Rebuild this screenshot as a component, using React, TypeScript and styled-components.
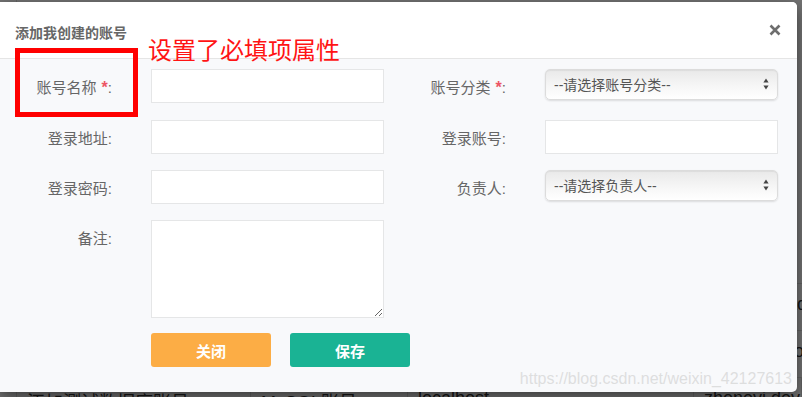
import React from "react";
import styled, { createGlobalStyle } from "styled-components";

const Global = createGlobalStyle`
  html, body { margin: 0; padding: 0; }
  body { font-family: "Liberation Sans", "Noto Sans CJK SC", sans-serif; background: #fff; }
  * { box-sizing: border-box; }
`;

const Page = styled.div`
  position: relative;
  width: 802px;
  height: 397px;
  overflow: hidden;
  background: #fff;
`;

const BgTable = styled.div`
  display: flex;
  flex-direction: column;
  padding-top: 283px;
  border-left: 1px solid #ddd;
  margin-left: 16px;
`;

const BgRow = styled.div`
  display: grid;
  grid-template-columns: 234px 157px 286px 1fr;
  height: 47px;
  border-top: 1px solid #ddd;
  font-size: 18px;
  color: #333;
  & > span {
    padding: 10px 0 0 10px;
    white-space: nowrap;
    border-right: 1px solid #ddd;
  }
`;

const Backdrop = styled.div`
  position: absolute;
  inset: 0;
  background: rgba(0, 0, 0, 0.55);
`;

const Modal = styled.div`
  position: absolute;
  left: 0;
  top: 2px;
  width: 797px;
  height: 390px;
  border-radius: 0 5px 5px 0;
  background: #f8f9fb;
  box-shadow: 0 5px 15px rgba(0, 0, 0, 0.5);
  display: flex;
  flex-direction: column;
  overflow: hidden;
`;

const Header = styled.div`
  height: 57px;
  background: #fff;
  border-bottom: 1px solid #e5e5e5;
  display: flex;
  justify-content: space-between;
  align-items: flex-start;
  padding: 21px 16px 0 15px;
`;

const Title = styled.h4`
  margin: 0;
  font-size: 14px;
  line-height: 20px;
  font-weight: bold;
  color: #676767;
`;

const CloseX = styled.button`
  border: 0;
  background: transparent;
  padding: 0;
  margin-top: 1px;
  width: 12px;
  height: 12px;
  cursor: pointer;
  display: flex;
`;

const Body = styled.div`
  padding-top: 10px;
  display: flex;
  flex-direction: column;
`;

const Row = styled.div<{ $mb?: number }>`
  display: flex;
  align-items: flex-start;
  margin-bottom: ${(p) => p.$mb ?? 16}px;
`;

const Field = styled.div`
  display: flex;
  align-items: flex-start;
  width: 394px;
`;

const Label = styled.label`
  width: 112px;
  height: 34px;
  margin-right: 39px;
  text-align: right;
  font-size: 15px;
  color: #666;
  line-height: 34px;
  padding-top: 2px;
  white-space: nowrap;
`;

const Star = styled.span`
  color: #ed5565;
  font-size: 16px;
  font-weight: bold;
  margin-left: 5px;
`;

const Input = styled.input`
  width: 233px;
  height: 34px;
  border: 1px solid #e5e6e7;
  background: #fff;
  border-radius: 0;
  outline: none;
  padding: 6px 12px;
  font-size: 14px;
`;

const TextArea = styled.textarea`
  width: 233px;
  height: 98px;
  border: 1px solid #e5e6e7;
  background: #fff;
  outline: none;
  padding: 6px 12px;
  font-size: 14px;
  display: block;
  margin: 0;
`;

const SelectWrap = styled.div`
  position: relative;
  width: 233px;
  height: 31px;
`;

const Select = styled.select`
  appearance: none;
  -webkit-appearance: none;
  width: 100%;
  height: 100%;
  border: 1px solid #dcdcdc;
  border-radius: 5px;
  background: linear-gradient(to bottom, #e9e9e9 0%, #f6f6f6 55%, #ffffff 100%);
  box-shadow: 0 1px 2px rgba(0, 0, 0, 0.12), inset 0 1px 1px rgba(0, 0, 0, 0.06);
  padding: 0 0 0 8px;
  font-family: "Liberation Sans", "Noto Sans CJK SC", sans-serif;
  font-size: 14px;
  color: #555;
  outline: none;
`;

const Arrows = styled.svg`
  position: absolute;
  right: 9px;
  top: 9px;
  pointer-events: none;
`;

const Buttons = styled.div`
  display: flex;
  gap: 19px;
  margin-left: 151px;
`;

const Btn = styled.button<{ $color: string }>`
  width: 120px;
  height: 34px;
  border: 0;
  border-radius: 3px;
  background: ${(p) => p.$color};
  color: #fff;
  font-family: "Liberation Sans", "Noto Sans CJK SC", sans-serif;
  font-size: 15px;
  font-weight: bold;
  cursor: pointer;
`;

const RedBox = styled.div`
  position: absolute;
  left: 15px;
  top: 48px;
  width: 123px;
  height: 69px;
  border: 5px solid #ff0000;
`;

const RedNote = styled.div`
  position: absolute;
  left: 148px;
  top: 37px;
  font-family: "Noto Sans CJK SC", sans-serif;
  font-size: 24px;
  line-height: 1;
  color: #ff1414;
`;

const Watermark = styled.div`
  position: absolute;
  right: 10px;
  top: 371px;
  font-family: "Liberation Sans", sans-serif;
  font-size: 16px;
  line-height: 16px;
  color: rgba(210, 210, 210, 0.7);
`;

const SelectBox: React.FC<{ placeholder: string }> = ({ placeholder }) => (
  <SelectWrap>
    <Select defaultValue="">
      <option value="">{placeholder}</option>
    </Select>
    <Arrows width="6" height="12" viewBox="0 0 6 12">
      <path d="M3 0.5 L5.6 4.6 L0.4 4.6 Z" fill="#444" />
      <path d="M3 11.5 L5.6 7.4 L0.4 7.4 Z" fill="#444" />
    </Arrows>
  </SelectWrap>
);

export default function App() {
  return (
    <Page>
      <Global />
      <BgTable>
        <BgRow>
          <span>测试服务器账号</span>
          <span>Linux账号</span>
          <span>192.168.1.20</span>
          <span>zhangsan admini</span>
        </BgRow>
        <BgRow>
          <span>测试应用账号</span>
          <span>应用账号</span>
          <span>http://test</span>
          <span>wangwu zhouww</span>
        </BgRow>
        <BgRow>
          <span>添加测试数据库账号</span>
          <span>MySQL账号</span>
          <span>localhost</span>
          <span>zhonevi dev</span>
        </BgRow>
      </BgTable>
      <Backdrop />
      <Modal>
        <Header>
          <Title>添加我创建的账号</Title>
          <CloseX aria-label="关闭">
            <svg width="12" height="12" viewBox="0 0 12 12">
              <path d="M1.5 1.5 L10.5 10.5 M10.5 1.5 L1.5 10.5" stroke="#6e6e6e" strokeWidth="2.6" strokeLinecap="butt" />
            </svg>
          </CloseX>
        </Header>
        <Body>
          <Row $mb={17}>
            <Field>
              <Label>
                账号名称<Star>*</Star>:
              </Label>
              <Input />
            </Field>
            <Field>
              <Label>
                账号分类<Star>*</Star>:
              </Label>
              <SelectBox placeholder="--请选择账号分类--" />
            </Field>
          </Row>
          <Row>
            <Field>
              <Label>登录地址:</Label>
              <Input />
            </Field>
            <Field>
              <Label>登录账号:</Label>
              <Input />
            </Field>
          </Row>
          <Row>
            <Field>
              <Label>登录密码:</Label>
              <Input type="password" />
            </Field>
            <Field>
              <Label>负责人:</Label>
              <SelectBox placeholder="--请选择负责人--" />
            </Field>
          </Row>
          <Row $mb={15}>
            <Field>
              <Label>备注:</Label>
              <TextArea />
            </Field>
          </Row>
          <Buttons>
            <Btn $color="#fcad45">关闭</Btn>
            <Btn $color="#1ab394">保存</Btn>
          </Buttons>
        </Body>
      </Modal>
      <RedBox />
      <RedNote>设置了必填项属性</RedNote>
      <Watermark>https://blog.csdn.net/weixin_42127613</Watermark>
    </Page>
  );
}
